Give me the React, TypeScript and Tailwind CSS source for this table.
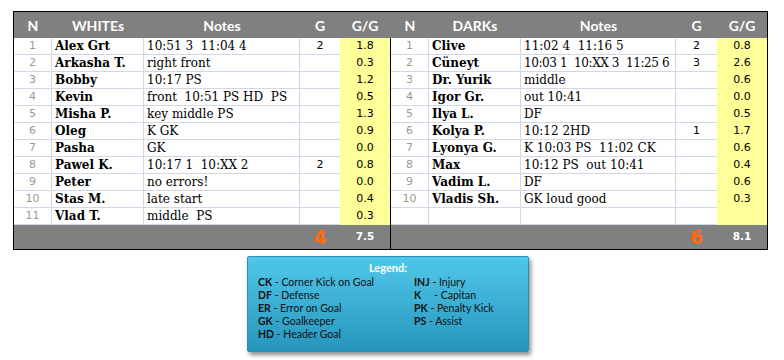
import React from "react";

type Row = [string, string, string, string];

const whites: Row[] = [
  ["Alex Grt", "10:51 3  11:04 4", "2", "1.8"],
  ["Arkasha T.", "right front", "", "0.3"],
  ["Bobby", "10:17 PS", "", "1.2"],
  ["Kevin", "front  10:51 PS HD  PS", "", "0.5"],
  ["Misha P.", "key middle PS", "", "1.3"],
  ["Oleg", "K GK", "", "0.9"],
  ["Pasha", "GK", "", "0.0"],
  ["Pawel K.", "10:17 1  10:XX 2", "2", "0.8"],
  ["Peter", "no errors!", "", "0.0"],
  ["Stas M.", "late start", "", "0.4"],
  ["Vlad T.", "middle  PS", "", "0.3"],
];

const darks: Row[] = [
  ["Clive", "11:02 4  11:16 5", "2", "0.8"],
  ["Cüneyt", "10:03 1  10:XX 3  11:25 6", "3", "2.6"],
  ["Dr. Yurik", "middle", "", "0.6"],
  ["Igor Gr.", "out 10:41", "", "0.0"],
  ["Ilya L.", "DF", "", "0.5"],
  ["Kolya P.", "10:12 2HD", "1", "1.7"],
  ["Lyonya G.", "K 10:03 PS  11:02 CK", "", "0.6"],
  ["Max", "10:12 PS  out 10:41", "", "0.4"],
  ["Vadim L.", "DF", "", "0.6"],
  ["Vladis Sh.", "GK loud good", "", "0.3"],
];

const legendLeft = [
  ["CK", "Corner Kick on Goal"],
  ["DF", "Defense"],
  ["ER", "Error on Goal"],
  ["GK", "Goalkeeper"],
  ["HD", "Header Goal"],
];

const legendRight = [
  ["INJ", " Injury"],
  ["K    ", " Capitan"],
  ["PK", " Penalty Kick"],
  ["PS", " Assist"],
];

const head = "font-['Lato','Liberation_Sans',sans-serif] font-bold text-[14px] text-white";
const sans = "font-['DejaVu_Sans','Liberation_Sans',sans-serif]";
const serif = "font-['DejaVu_Serif','Liberation_Serif',serif]";
const grid = "border-[#d0d7e5]";

function Half({
  title,
  rows,
  goals,
  total,
  notesW,
  gW,
  divider,
}: {
  title: string;
  rows: Row[];
  goals: string;
  total: string;
  notesW: string;
  gW: string;
  divider?: boolean;
}) {
  const padded = [...rows];
  while (padded.length < 11) padded.push(["", "", "", ""]);
  return (
    <div className="flex flex-col">
      <div className={`flex h-[26px] bg-[#808080] items-center ${head}`}>
        <div className="w-[38px] text-center">N</div>
        <div className="w-[92px] text-center">{title}</div>
        <div className={`${notesW} text-center`}>Notes</div>
        <div className={`${gW} text-center`}>G</div>
        <div className={`w-[50px] text-center ${divider ? "mr-px" : ""}`}>G/G</div>
      </div>
      <div className={`flex flex-col ${divider ? "border-r border-black" : ""}`}>
        {padded.map((r, i) => (
          <div key={i} className="flex h-[17px]">
            <div
              className={`w-[38px] border-r border-b ${grid} flex items-center justify-center text-[11px] text-[#999] ${sans}`}
            >
              {r[0] ? i + 1 : ""}
            </div>
            <div
              className={`w-[92px] border-r border-b ${grid} flex items-center pl-[3px] text-[12px] font-bold text-black ${serif} whitespace-nowrap`}
            >
              {r[0]}
            </div>
            <div
              className={`${notesW} border-r border-b ${grid} flex items-center pl-[3px] text-[12px] text-black ${serif} whitespace-pre ${
                r[1].length > 22 ? "tracking-[-0.4px]" : ""
              }`}
            >
              {r[1]}
            </div>
            <div
              className={`${gW} border-b ${grid} flex items-center justify-center text-[11px] text-black ${sans}`}
            >
              {r[2]}
            </div>
            <div
              className={`w-[50px] bg-[#ffff99] flex items-center justify-center text-[11px] text-black ${sans}`}
            >
              {r[3]}
            </div>
          </div>
        ))}
      </div>
      <div
        className={`flex h-[24px] bg-[#808080] items-center ${divider ? "border-r border-black" : ""}`}
      >
        <div className="flex-1" />
        <div
          className={`${gW} text-center text-[19px] leading-none font-bold text-[#ff6a13] ${sans}`}
        >
          {goals}
        </div>
        <div className={`w-[50px] text-center text-[10.5px] font-bold text-white ${sans}`}>
          {total}
        </div>
      </div>
    </div>
  );
}

export default function App() {
  return (
    <div className="w-[784px] h-[360px] bg-white pt-[11px] pl-[13px]">
      <div className="flex w-[755px] border border-black">
        <Half
          title="WHITEs"
          rows={whites}
          goals="4"
          total="7.5"
          notesW="w-[156px]"
          gW="w-[40px]"
          divider
        />
        <Half
          title="DARKs"
          rows={darks}
          goals="6"
          total="8.1"
          notesW="w-[155px]"
          gW="w-[41px]"
        />
      </div>
      <div className="ml-[234px] mt-[6px] w-[282px] h-[96px] rounded-[2px] border border-[#2b8fb0] bg-gradient-to-b from-[#50c8ea] to-[#2695bd] shadow-[2px_3px_4px_rgba(0,0,0,0.45)] px-[10px] pt-[4px] font-['Lato','Liberation_Sans',sans-serif] text-[10.5px] text-[#111]">
        <div className="text-center font-bold text-white text-[11px] leading-[14px]">
          Legend:
        </div>
        <div className="flex mt-[1px]">
          <div className="w-[156px] flex flex-col">
            {legendLeft.map(([k, v]) => (
              <div key={k} className="h-[13px] leading-[13px] whitespace-pre">
                <span className="font-bold">{k}</span> - {v}
              </div>
            ))}
          </div>
          <div className="flex flex-col">
            {legendRight.map(([k, v]) => (
              <div key={k} className="h-[13px] leading-[13px] whitespace-pre">
                <span className="font-bold">{k}</span> -{v}
              </div>
            ))}
          </div>
        </div>
      </div>
    </div>
  );
}
